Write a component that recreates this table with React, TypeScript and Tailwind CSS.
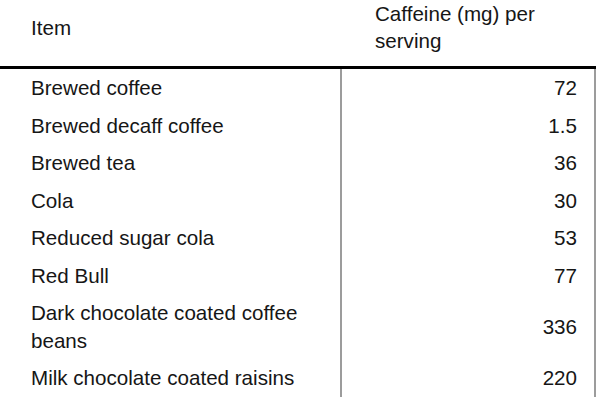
import React from "react";

const rows: [string, string][] = [
  ["Brewed coffee", "72"],
  ["Brewed decaff coffee", "1.5"],
  ["Brewed tea", "36"],
  ["Cola", "30"],
  ["Reduced sugar cola", "53"],
  ["Red Bull", "77"],
  ["Dark chocolate coated coffee beans", "336"],
  ["Milk chocolate coated raisins", "220"],
];

export default function App() {
  return (
    <div
      className="w-[600px] h-[404px] overflow-hidden bg-white text-[#161616] text-[20.6px]"
      style={{ fontFamily: '"Liberation Sans", Arial, Helvetica, sans-serif' }}
    >
      <div className="w-[596px]">
        <div className="grid grid-cols-[340px_256px] h-[69px] border-b-[3px] border-black">
          <div className="flex items-center pl-[31px] pb-[12px] leading-[27px]">Item</div>
          <div className="flex items-center pl-[35px] pr-[40px] pb-[12px] leading-[27px]">
            Caffeine (mg) per serving
          </div>
        </div>
        {rows.map(([item, mg]) => (
          <div key={item} className="grid grid-cols-[340px_256px]">
            <div className="pl-[31px] pr-[30px] py-[5px] leading-[27.5px]">{item}</div>
            <div className="flex items-center justify-end border-l-2 border-r-2 border-[#9c9c9c] pr-[17px] leading-[27.5px]">
              {mg}
            </div>
          </div>
        ))}
      </div>
    </div>
  );
}
